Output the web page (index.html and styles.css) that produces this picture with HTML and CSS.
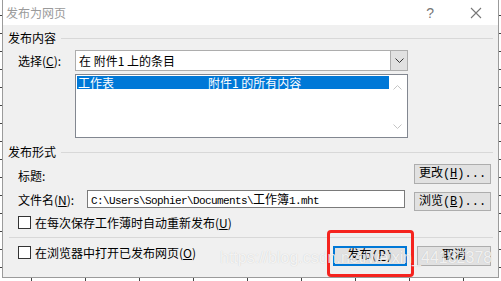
FILE: index.html
```html
<!DOCTYPE html>
<html lang="zh-CN">
<head>
    <meta charset="UTF-8">
    <title>发布为网页</title>
    <link rel="stylesheet" href="styles.css">
</head>
<body>

    <div class="dialog">
        <!-- Titel -->
        <div class="titlebar">
            <span class="title">发布为网页</span>
            <span class="help">?</span>
            <svg class="close" width="12" height="12" viewBox="0 0 12 12">
                <path d="M1 1 L11 11 M11 1 L1 11" stroke="#777" stroke-width="1.1" fill="none"/>
            </svg>
        </div>

        <div class="content">
            <div class="group-head"><span>发布内容</span><i class="rule"></i></div>

            <div class="row row-select">
                <label>选择(<u>C</u>):</label>
                <div class="combo">
                    <span class="combo-text">在 附件1 上的条目</span>
                    <span class="combo-btn">
                        <svg width="9" height="5" viewBox="0 0 9 5"><path d="M0.5 0.5 L4.5 4.5 L8.5 0.5" stroke="#333" fill="none"/></svg>
                    </span>
                </div>
            </div>

            <div class="listbox">
                <div class="items">
                    <div class="item selected"><span class="col1">工作表</span><span>附件1 的所有内容</span></div>
                </div>
                <div class="scroll">
                    <svg width="9" height="5" viewBox="0 0 9 5"><path d="M0.5 4.5 L4.5 0.5 L8.5 4.5" stroke="#c4c4c4" fill="none"/></svg>
                    <svg width="9" height="5" viewBox="0 0 9 5"><path d="M0.5 0.5 L4.5 4.5 L8.5 0.5" stroke="#c4c4c4" fill="none"/></svg>
                </div>
            </div>

            <div class="group-head second"><span>发布形式</span><i class="rule"></i></div>

            <div class="row row-title">
                <label>标题:</label>
                <button class="btn">更改(<u>H</u>)...</button>
            </div>

            <div class="row row-file">
                <label>文件名(<u>N</u>):</label>
                <div class="textbox">C:\Users\Sophier\Documents\<span class="cjk">工作簿</span>1.mht</div>
                <button class="btn btn-low">浏览(<u>B</u>)...</button>
            </div>

            <div class="check check-first"><span class="box"></span>在每次保存工作薄时自动重新发布(<u>U</u>)</div>

            <div class="separator"></div>

            <div class="footer">
                <div class="check"><span class="box"></span>在浏览器中打开已发布网页(<u>O</u>)</div>
                <div class="actions">
                    <button class="btn btn-default">发布(<u>P</u>)</button>
                    <button class="btn">取消</button>
                </div>
            </div>
        </div>

        <!-- markering og vandmaerke -->
        <div class="highlight"></div>
        <div class="watermark">https://blog.csdn.net/weixin_44182378</div>
    </div>

</body>
</html>
```

FILE: styles.css
```css
* {
    box-sizing: border-box;
}

body {
    margin: 0;
    width: 501px;
    height: 281px;
    overflow: hidden;
    font-family: "Noto Sans CJK SC", "Noto Sans", sans-serif;
    font-size: 12px;
    color: #000;
    background-color: #fff;
    background-image:
        repeating-linear-gradient(90deg, transparent 0 31px, #444 31px 32px, transparent 32px 54px),
        repeating-linear-gradient(180deg, transparent 0 15px, #444 15px 16px, transparent 16px 18px);
}

.dialog {
    position: relative;
    margin-left: 2px;
    width: 497px;
    height: 278px;
    border: 1px solid #9b9b9b;
    border-top: none;
    background: #f0f0f0;
}

/* Titel */
.titlebar {
    height: 25px;
    background: #fff;
    display: flex;
    align-items: center;
    padding-left: 3px;
    padding-right: 16px;
}

.title {
    color: #9a9a9a;
    line-height: 14px;
    flex: 1;
}

.help {
    font-family: "Liberation Sans", sans-serif;
    font-size: 14px;
    color: #777;
    margin-right: 36px;
}

.close {
    display: block;
}

.content {
    padding: 6px 5px 0 0;
}

.group-head {
    height: 14px;
    display: flex;
    align-items: center;
    padding-left: 5px;
    line-height: 14px;
}

.group-head .rule {
    flex: 1;
    height: 1px;
    margin-left: 5px;
    background: #d8d8d8;
}

.group-head.second {
    margin-top: 7px;
}

.row {
    display: flex;
    padding-left: 15px;
}

.row label {
    line-height: 14px;
}

.row-select {
    margin-top: 5px;
    height: 21px;
    align-items: center;
}

.row-select label {
    width: 57px;
}

.combo {
    width: 333px;
    height: 21px;
    display: flex;
    border: 1px solid #adadad;
    background: #fff;
}

.combo-text {
    flex: 1;
    padding-left: 3px;
    line-height: 19px;
}

.combo-btn {
    width: 17px;
    display: flex;
    align-items: center;
    justify-content: center;
    background: #e1e1e1;
    border-left: 1px solid #adadad;
}

.listbox {
    margin: 3px 0 0 72px;
    width: 333px;
    height: 64px;
    border: 1px solid #828790;
    background: #fff;
    display: flex;
    padding: 1px;
}

.items {
    flex: 1;
}

.item {
    height: 13px;
    line-height: 13px;
    padding-left: 1px;
    display: flex;
}

.item.selected {
    background: #0078d7;
    color: #fff;
}

.item .col1 {
    width: 130px;
}

.scroll {
    width: 17px;
    display: flex;
    flex-direction: column;
    justify-content: space-between;
    align-items: center;
    padding: 9px 0 7px;
}

.row-title {
    margin-top: 5px;
    height: 20px;
    justify-content: space-between;
    padding-right: 2px;
}

.row-title label {
    padding-top: 5px;
}

.row-file {
    margin-top: 6px;
    height: 21px;
    padding-right: 2px;
}

.row-file label {
    width: 69px;
    padding-top: 3px;
}

.textbox {
    width: 318px;
    height: 18px;
    border: 1px solid #7a7a7a;
    background: #fff;
    padding-left: 3px;
    font-family: "Liberation Mono", monospace;
    font-size: 11px;
    letter-spacing: -0.6px;
    line-height: 16px;
    white-space: nowrap;
    overflow: hidden;
}

.textbox .cjk {
    font-family: "Noto Sans CJK SC", sans-serif;
    font-size: 12px;
    letter-spacing: 0;
}

.btn {
    width: 77px;
    height: 20px;
    padding: 0;
    border: 1px solid #adadad;
    background: #e1e1e1;
    font-family: "Liberation Mono", "Noto Sans CJK SC", monospace;
    font-size: 12px;
    line-height: 16px;
    color: #000;
}

.row-file .btn {
    margin-left: 9px;
}

.btn-low {
    margin-top: 2px;
    height: 19px;
}

.check {
    display: flex;
    align-items: center;
    height: 15px;
    padding-left: 15px;
    line-height: 15px;
}

.check u,
.btn u,
label u {
    text-decoration: underline;
}

.check .box {
    width: 13px;
    height: 13px;
    border: 1px solid #333;
    background: #fff;
    margin-right: 4px;
}

.check-first {
    margin-top: 4px;
}

.separator {
    margin: 7px 0 0 6px;
    height: 1px;
    background: #d8d8d8;
}

.footer {
    margin-top: 8px;
    height: 20px;
    display: flex;
    justify-content: space-between;
    align-items: flex-start;
    padding-right: 2px;
}

.footer .check {
    height: 13px;
}

.actions {
    display: flex;
    gap: 10px;
}

.actions .btn {
    width: 74px;
}

.btn-default {
    border: 2px solid #0078d7;
}

/* Roed ramme rundt om knappen */
.highlight {
    position: absolute;
    left: 324px;
    top: 230px;
    width: 87px;
    height: 47px;
    border: 3px solid #f5231e;
    border-radius: 4px;
}

.watermark {
    position: absolute;
    left: 217px;
    top: 248px;
    font-family: "Liberation Sans", sans-serif;
    font-size: 16px;
    line-height: 19px;
    color: rgba(255, 255, 255, 0.8);
    text-shadow: 0 0 1px rgba(0, 0, 0, 0.18);
    white-space: nowrap;
    pointer-events: none;
}
```
